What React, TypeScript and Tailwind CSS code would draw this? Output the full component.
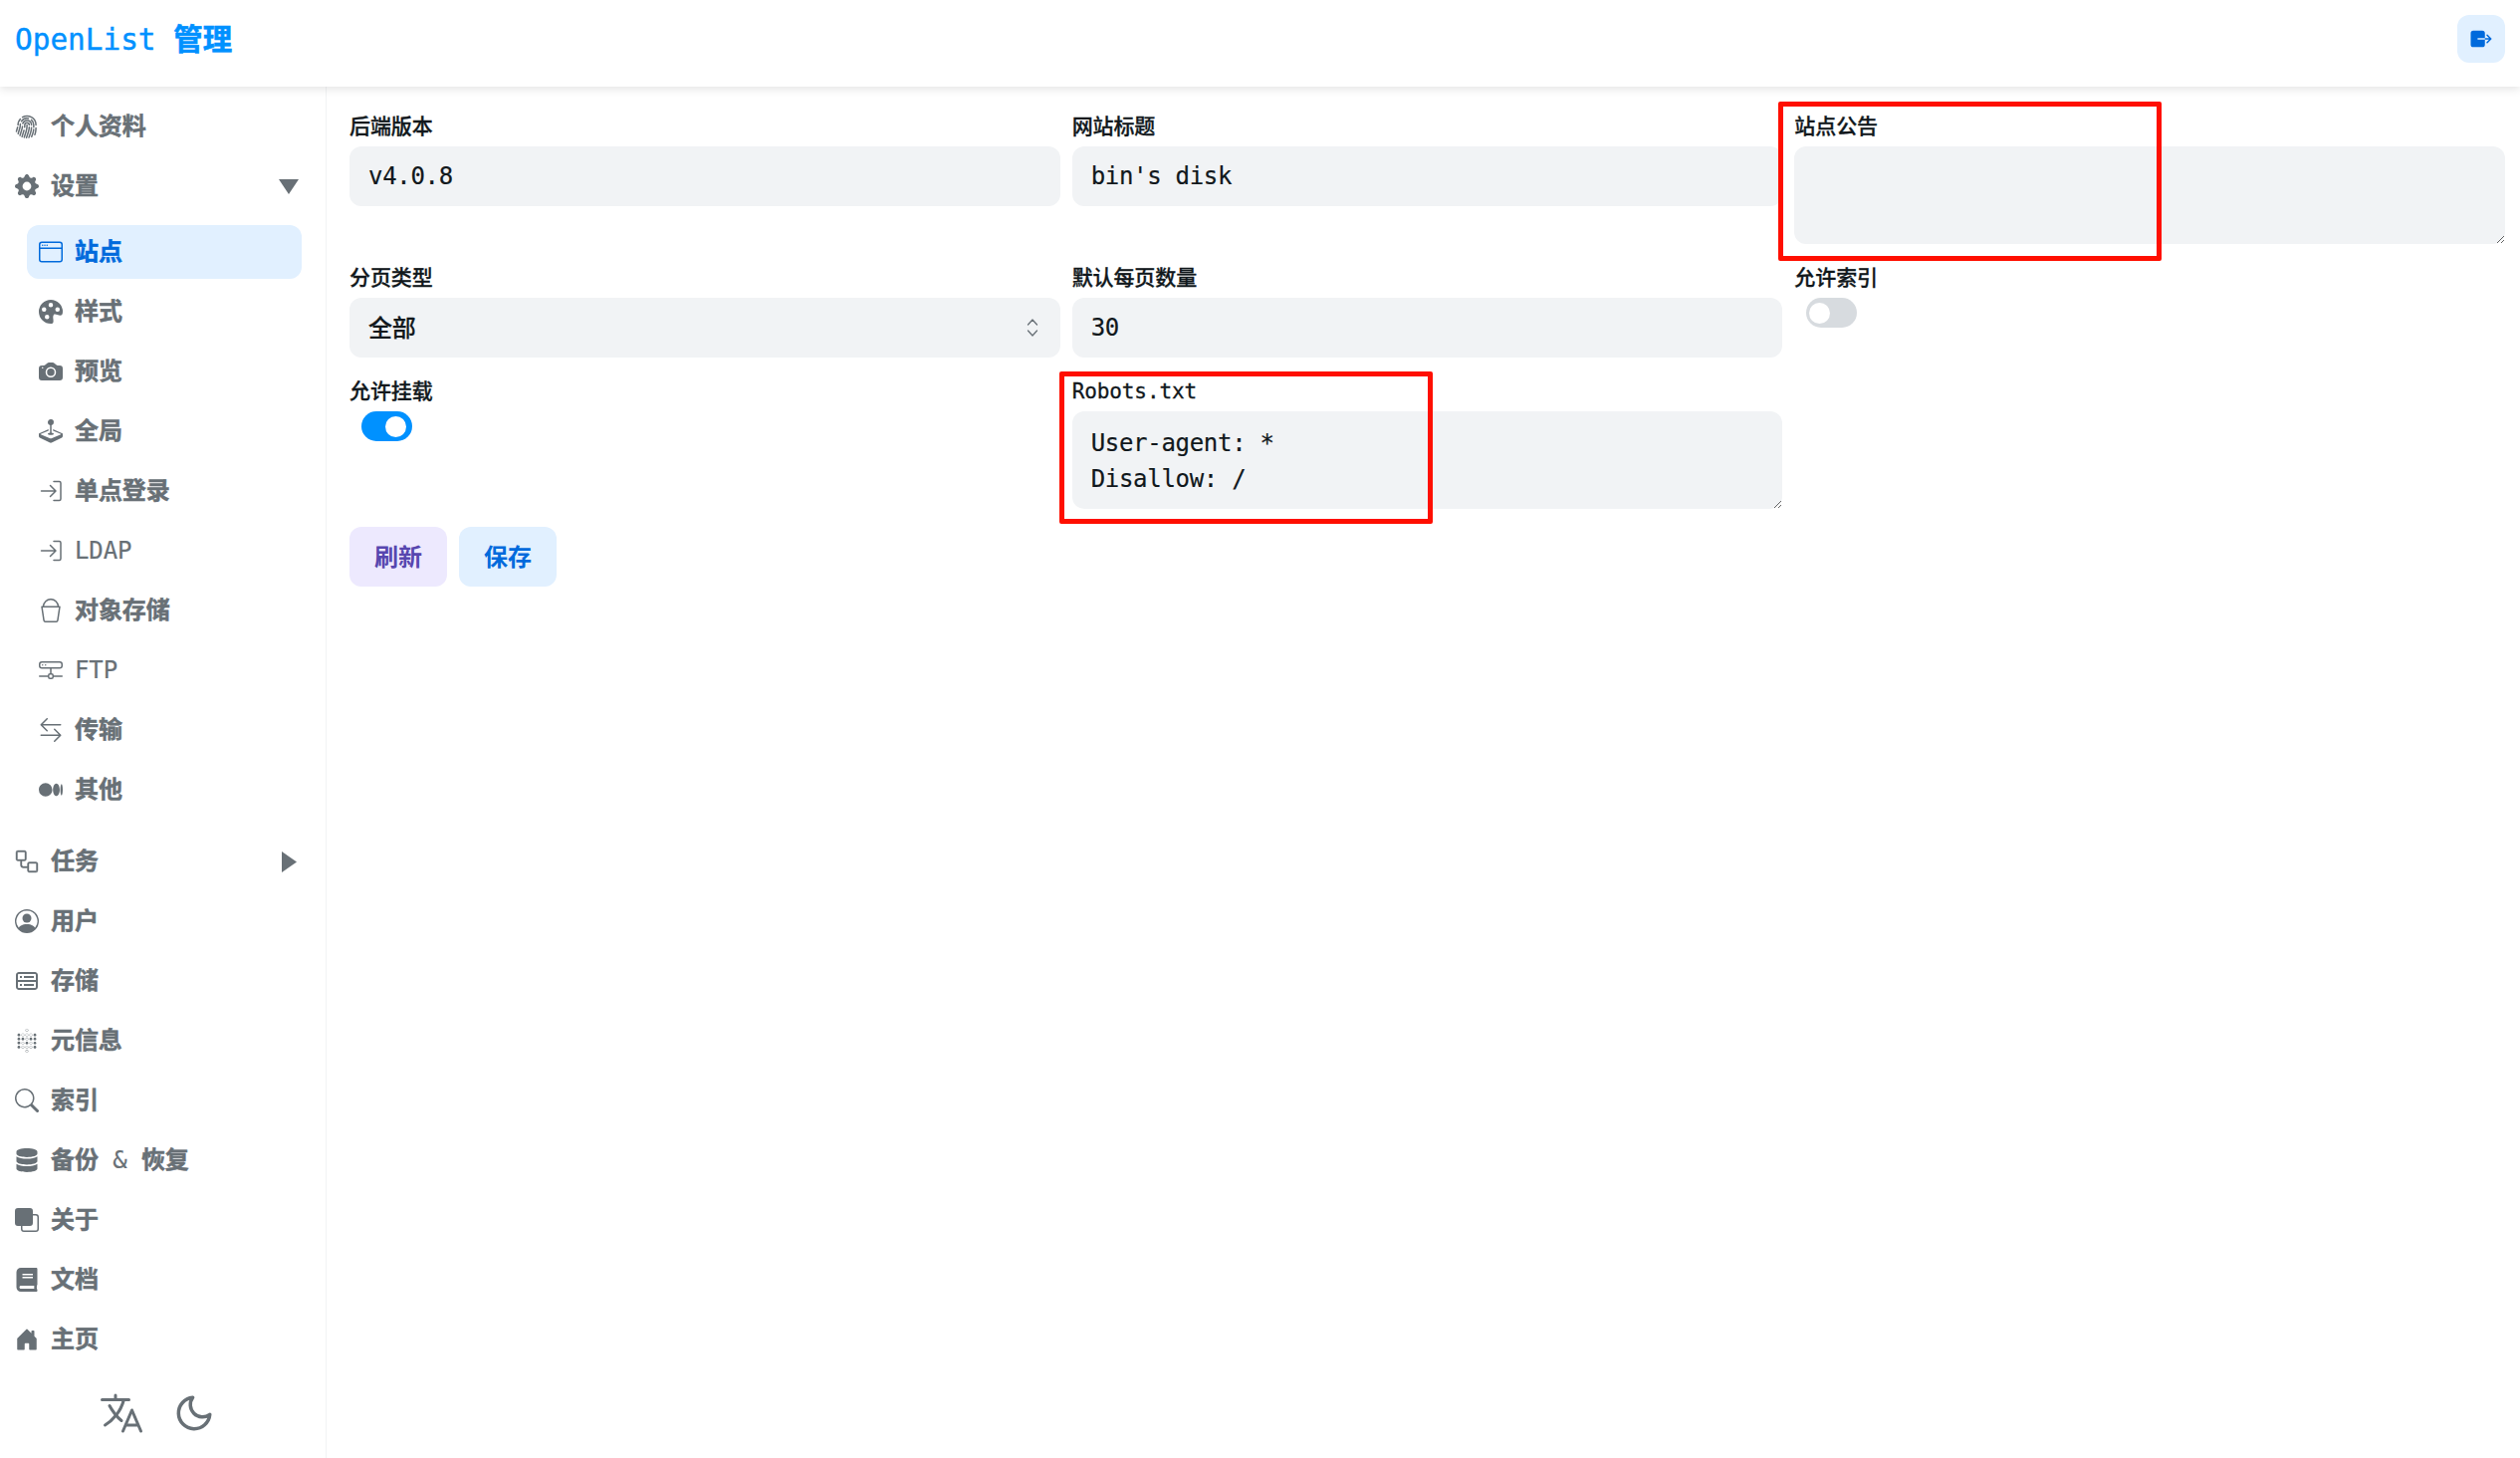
import { ReactNode } from "react";
import { BsArrowLeftRight, BsBucket, BsCameraFill, BsFingerprint, BsFront, BsGearFill, BsHddNetwork, BsHouseDoorFill, BsJoystick, BsMedium, BsPaletteFill, BsPersonCircle, BsSearch, BsWindow } from "react-icons/bs";
import { CgDatabase } from "react-icons/cg";
import { FaBook, FaDatabase } from "react-icons/fa";
import { FiMoon } from "react-icons/fi";
import { GoWorkflow } from "react-icons/go";
import { IoExit, IoLanguageOutline } from "react-icons/io5";
import { SiMetabase } from "react-icons/si";

const SignIn = () => (
  <svg viewBox="0 0 24 24" width="24" height="24" fill="none" stroke="currentColor" strokeWidth="1.5" strokeLinecap="round" strokeLinejoin="round">
    <path d="M2.5 12h14M11.5 6.5l5.5 5.5-5.5 5.5M15 2.5h5.5a1.5 1.5 0 0 1 1.5 1.5v16a1.5 1.5 0 0 1-1.5 1.5H15" />
  </svg>
);

const subItems: { title: string; icon: ReactNode; active?: boolean }[] = [
  { title: "站点", icon: <BsWindow size={24} />, active: true },
  { title: "样式", icon: <BsPaletteFill size={24} /> },
  { title: "预览", icon: <BsCameraFill size={24} /> },
  { title: "全局", icon: <BsJoystick size={24} /> },
  { title: "单点登录", icon: <SignIn /> },
  { title: "LDAP", icon: <SignIn /> },
  { title: "对象存储", icon: <BsBucket size={24} /> },
  { title: "FTP", icon: <BsHddNetwork size={24} /> },
  { title: "传输", icon: <BsArrowLeftRight size={24} /> },
  { title: "其他", icon: <BsMedium size={24} /> },
];

const bottomItems: { title: string; icon: ReactNode }[] = [
  { title: "用户", icon: <BsPersonCircle size={24} /> },
  { title: "存储", icon: <CgDatabase size={24} /> },
  { title: "元信息", icon: <SiMetabase size={24} /> },
  { title: "索引", icon: <BsSearch size={24} /> },
  { title: "备份 & 恢复", icon: <FaDatabase size={24} /> },
  { title: "关于", icon: <BsFront size={24} /> },
  { title: "文档", icon: <FaBook size={24} /> },
  { title: "主页", icon: <BsHouseDoorFill size={24} /> },
];

// only the chinese parts of a title are heavy, latin stays regular
const Title = ({ text }: { text: string }) => (
  <>
    {text.split(/([\u4e00-\u9fff]+)/).map((part, i) =>
      /[\u4e00-\u9fff]/.test(part) ? (
        <span key={i} className="font-bold [-webkit-text-stroke:0.5px_currentColor]">{part}</span>
      ) : (
        <span key={i} className="[-webkit-text-stroke:0.2px_currentColor]">{part}</span>
      )
    )}
  </>
);

const MenuRow = ({ title, icon, right }: { title: string; icon: ReactNode; right?: ReactNode }) => (
  <div className="flex h-[54px] items-center pl-[15px] pr-[3px] text-[#687076]">
    <span className="mr-3 flex w-6 justify-center">{icon}</span>
    <span className="flex-1 text-[24px] tracking-[-0.1px] whitespace-pre">
      <Title text={title} />
    </span>
    {right}
  </div>
);

const SubRow = ({ title, icon, active }: { title: string; icon: ReactNode; active?: boolean }) => (
  <div className={`ml-[27px] flex h-[54px] items-center rounded-[12px] pl-3 ${active ? "bg-[#e1f0ff] text-[#006adc]" : "text-[#687076]"}`}>
    <span className="mr-3 flex w-6 justify-center">{icon}</span>
    <span className="text-[24px] tracking-[-0.1px]">
      <Title text={title} />
    </span>
  </div>
);

const Label = ({ children }: { children: ReactNode }) => (
  <label className="mb-[6px] block h-[30px] text-[21px] leading-[32px] font-medium tracking-[-0.1px] text-[#11181c] [-webkit-text-stroke:0.3px_currentColor]">{children}</label>
);

const inputClass = "h-[60px] w-full rounded-[12px] bg-[#f1f3f5] px-[19px] text-[24px] tracking-[-0.3px] text-[#11181c] outline-none [-webkit-text-stroke:0.2px_currentColor]";
const textareaClass = "block h-[98px] w-full resize rounded-[12px] bg-[#f1f3f5] px-[19px] pt-[14px] pb-3 text-[24px] leading-[36px] tracking-[-0.3px] text-[#11181c] outline-none [-webkit-text-stroke:0.2px_currentColor]";

const Switch = ({ on }: { on?: boolean }) => (
  <div className={`ml-3 flex h-[30px] w-[51px] items-center rounded-full px-[3px] ${on ? "justify-end bg-[#0091ff] pr-[6px]" : "bg-[#d7dbdf]"}`}>
    <div className="h-[21px] w-[21px] rounded-full bg-white" />
  </div>
);

export default function App() {
  return (
    <div
      className="relative flex h-screen flex-col overflow-hidden bg-white"
      style={{ fontFamily: '"DejaVu Sans Mono", "Noto Sans CJK SC", monospace' }}
    >
      <header className="z-10 flex h-[87px] shrink-0 items-center justify-between bg-white px-[15px] pb-[9px] shadow-[0_3px_8px_rgba(0,0,0,0.1)]">
        <h1 className="pt-[2px] text-[29.4px] leading-[40px] text-[#0091ff] [-webkit-text-stroke:0.4px_currentColor]">
          OpenList <span className="font-bold [-webkit-text-stroke:0.6px_currentColor]">管理</span>
        </h1>
        <button className="flex h-12 w-12 items-center justify-center rounded-[12px] bg-[#e1f0ff] text-[#006adc]">
          <IoExit size={24} />
        </button>
      </header>

      <div className="flex min-h-0 flex-1">
        <aside className="flex w-[328px] shrink-0 flex-col border-r border-[#f1f3f5] pt-[13px] pr-[24px]">
          <div className="flex flex-col gap-[6px]">
            <MenuRow title="个人资料" icon={<BsFingerprint size={24} />} />
            <MenuRow
              title="设置"
              icon={<BsGearFill size={24} />}
              right={
                <svg viewBox="0 0 20 15" width="20" height="15">
                  <polygon points="0,0 20,0 10,15" fill="currentColor" />
                </svg>
              }
            />
            <div className="mt-[6px] flex flex-col gap-[6px]">
              {subItems.map((item) => (
                <SubRow key={item.title} title={item.title} icon={item.icon} active={item.active} />
              ))}
            </div>
            <div className="mt-3">
              <MenuRow
                title="任务"
                icon={<GoWorkflow size={24} stroke="currentColor" strokeWidth={0.4} />}
                right={
                  <svg viewBox="0 0 15 21" width="15" height="21" className="mr-[2px]">
                    <polygon points="0,0 15,10.5 0,21" fill="currentColor" />
                  </svg>
                }
              />
            </div>
            {bottomItems.map((item) => (
              <MenuRow key={item.title} title={item.title} icon={item.icon} />
            ))}
          </div>
          <div className="mt-[23px] flex items-center justify-center gap-7 pl-[11px] text-[#687076]">
            <IoLanguageOutline size={48} />
            <FiMoon size={42} />
          </div>
        </aside>

        <main className="min-w-0 flex-1 pt-6 pr-[15px] pl-[23px]">
          <div className="grid grid-cols-3 gap-x-3 gap-y-[18px]">
            <div>
              <Label>后端版本</Label>
              <input className={inputClass} defaultValue="v4.0.8" readOnly />
            </div>
            <div>
              <Label>网站标题</Label>
              <input className={inputClass} defaultValue="bin's disk" />
            </div>
            <div>
              <Label>站点公告</Label>
              <textarea className={textareaClass} />
            </div>
            <div>
              <Label>分页类型</Label>
              <div className={`${inputClass} flex items-center justify-between`}>
                <span className="pt-[2px] font-medium">全部</span>
                <svg viewBox="0 0 12 18" width="12" height="18" fill="none" stroke="#687076" strokeWidth="1.3" strokeLinecap="round" strokeLinejoin="round" className="mr-[3px]">
                  <path d="M1.5 6 6 1l4.5 5M1.5 12 6 17l4.5-5" />
                </svg>
              </div>
            </div>
            <div>
              <Label>默认每页数量</Label>
              <input className={inputClass} defaultValue="30" />
            </div>
            <div>
              <Label>允许索引</Label>
              <Switch />
            </div>
            <div>
              <Label>允许挂载</Label>
              <Switch on />
            </div>
            <div>
              <Label>Robots.txt</Label>
              <textarea className={textareaClass} defaultValue={"User-agent: *\nDisallow: /"} />
            </div>
          </div>
          <div className="mt-[18px] flex gap-3">
            <button className="h-[60px] w-[98px] rounded-[12px] bg-[#ede9fe] pt-[2px] text-[24px] font-bold text-[#5746af]">刷新</button>
            <button className="h-[60px] w-[98px] rounded-[12px] bg-[#e1f0ff] pt-[2px] text-[24px] font-bold text-[#006adc]">保存</button>
          </div>
        </main>
      </div>

      {/* red annotation boxes drawn over the screenshot */}
      <div className="pointer-events-none absolute top-[102px] left-[1786px] h-[160px] w-[385px] rounded-[2px] border-[5px] border-[#ff0f00]" />
      <div className="pointer-events-none absolute top-[373px] left-[1064px] h-[153px] w-[375px] rounded-[2px] border-[5px] border-[#ff0f00]" />
    </div>
  );
}
